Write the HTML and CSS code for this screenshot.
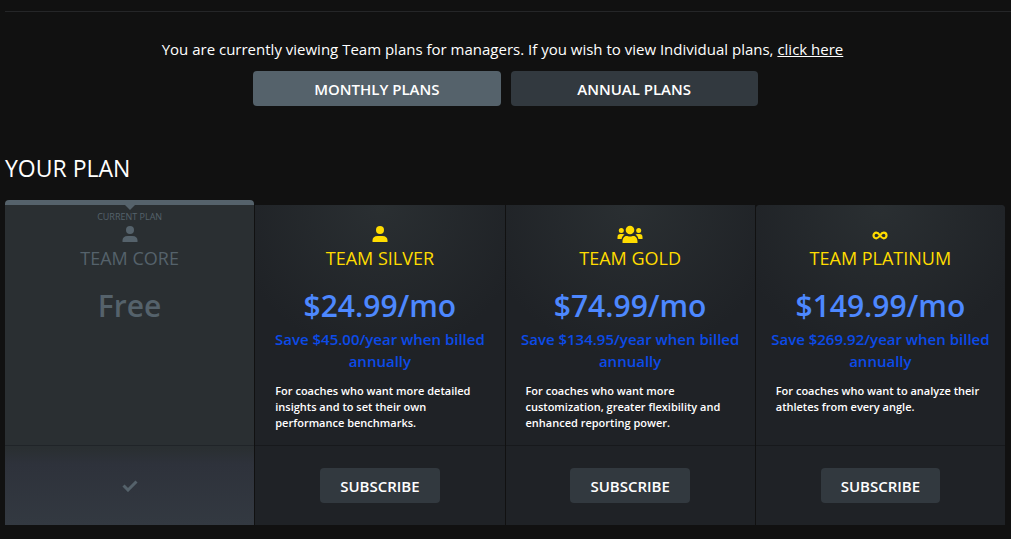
FILE: index.html
```
<!DOCTYPE html>
<html lang="en">
<head>
    <meta charset="UTF-8">
    <meta name="viewport" content="width=device-width, initial-scale=1.0">
    <title>Team Plans</title>
    <link rel="stylesheet" href="styles.css">
</head>
<body>
    <main class="page">
        <section class="intro">
            <p>You are currently viewing Team plans for managers. If you wish to view Individual plans, <a href="#individual">click here</a></p>
            <div class="billing">
                <button class="btn active" type="button">MONTHLY PLANS</button>
                <button class="btn" type="button">ANNUAL PLANS</button>
            </div>
        </section>

        <h1>YOUR PLAN</h1>

        <div class="plans">
            <article class="plan current">
                <div class="details">
                    <span class="tag">CURRENT PLAN</span>
                    <svg class="icon" viewBox="0 0 16 18" width="16" height="18" aria-hidden="true">
                        <circle cx="8" cy="5" r="4"/>
                        <path d="M0.5 17v-1.500c0-3 2-4.500 5-4.500h5c3 0 5 1.500 5 4.500V17z"/>
                    </svg>
                    <h2>TEAM CORE</h2>
                    <p class="price">Free</p>
                </div>
                <div class="action">
                    <svg class="check" viewBox="0 0 16 12" width="16" height="12" role="img" aria-label="Current plan">
                        <path d="M1.500 5.500l4.500 4.500L14.500 1.500"/>
                    </svg>
                </div>
            </article>

            <article class="plan">
                <div class="details">
                    <svg class="icon" viewBox="0 0 16 18" width="16" height="18" aria-hidden="true">
                        <circle cx="8" cy="5" r="4"/>
                        <path d="M0.5 17v-1.500c0-3 2-4.500 5-4.500h5c3 0 5 1.500 5 4.500V17z"/>
                    </svg>
                    <h2>TEAM SILVER</h2>
                    <p class="price">$24.99/mo</p>
                    <p class="saving">Save $45.00/year when billed annually</p>
                    <p class="text">For coaches who want more detailed insights and to set their own performance benchmarks.</p>
                </div>
                <div class="action">
                    <button class="btn" type="button">SUBSCRIBE</button>
                </div>
            </article>

            <article class="plan">
                <div class="details">
                    <svg class="icon" viewBox="0 0 26 18" width="26" height="18" aria-hidden="true">
                        <circle cx="13" cy="5" r="4.300"/>
                        <circle cx="4.300" cy="5.500" r="2.500"/>
                        <circle cx="21.700" cy="5.500" r="2.500"/>
                        <path d="M5.500 18v-1.500c0-3 1.500-5.500 4-5.500 1.200 0 1.800.6 3.500.6s2.300-.6 3.500-.6c2.500 0 4 2.500 4 5.500V18z"/>
                        <path d="M.5 14v-2c0-1.800 1-3 2.800-3H5.500c.9 0 1.600.3 2 .8-1.800 1-2.600 2.500-2.900 4.200z"/>
                        <path d="M25.500 14v-2c0-1.800-1-3-2.800-3h-2.200c-.9 0-1.600.3-2 .8 1.800 1 2.600 2.500 2.900 4.200z"/>
                    </svg>
                    <h2>TEAM GOLD</h2>
                    <p class="price">$74.99/mo</p>
                    <p class="saving">Save $134.95/year when billed annually</p>
                    <p class="text">For coaches who want more customization, greater flexibility and enhanced reporting power.</p>
                </div>
                <div class="action">
                    <button class="btn" type="button">SUBSCRIBE</button>
                </div>
            </article>

            <article class="plan">
                <div class="details">
                    <svg class="icon infinity" viewBox="0 0 16 18" width="16" height="18" aria-hidden="true">
                        <path d="M8 10.500C6.500 8.300 5.500 7.700 4.300 7.700a2.800 2.800 0 0 0 0 5.600C5.500 13.300 6.500 12.700 8 10.500s2.500-2.800 3.700-2.800a2.800 2.800 0 0 1 0 5.600C10.500 13.300 9.500 12.700 8 10.500z"/>
                    </svg>
                    <h2>TEAM PLATINUM</h2>
                    <p class="price">$149.99/mo</p>
                    <p class="saving">Save $269.92/year when billed annually</p>
                    <p class="text">For coaches who want to analyze their athletes from every angle.</p>
                </div>
                <div class="action">
                    <button class="btn" type="button">SUBSCRIBE</button>
                </div>
            </article>
        </div>
    </main>
</body>
</html>
```
FILE: styles.css
```
* {
    box-sizing: border-box;
}
body {
    margin: 0;
    background-color: #111;
    color: #fff;
    font-family: "Open Sans", sans-serif;
    font-size: 15px;
    line-height: 22px;
}
h1, h2, p {
    margin: 0;
    font-weight: 400;
}
.page {
    padding: 11px 0 14px 5px;
}
.intro {
    border-top: 1px solid #252628;
    padding: 26px 5px 28px 0;
    text-align: center;
}
.intro p {
    padding-right: 6px;
}
.intro a {
    color: #fff;
}
.billing {
    display: flex;
    justify-content: center;
    gap: 10px;
    margin-top: 11px;
    padding: 0 6px;
}
.billing .btn {
    width: 25%;
}
.btn {
    height: 35px;
    padding: 0 20px;
    border: none;
    border-radius: 4px;
    background-color: #32393f;
    color: #fff;
    font-family: inherit;
    font-size: 15px;
    font-weight: 600;
    cursor: pointer;
}
.btn.active {
    background-color: #55626b;
}
h1 {
    padding: 17px 0 15px;
    font-size: 23px;
    line-height: 34px;
}

/* plan columns */
.plans {
    display: grid;
    grid-template-columns: repeat(4, 1fr);
    gap: 1px;
    margin-right: 6px;
    padding-top: 5px;
}
.plan {
    display: flex;
    flex-direction: column;
    background-color: #1f2226;
    text-align: center;
}
.plan:last-child {
    border-radius: 4px 4px 0 0;
}
.details {
    flex: 1;
    min-height: 241px;
    padding: 20px 14px 12px;
    border-bottom: 1px solid #17191c;
    border-radius: inherit;
    background: radial-gradient(circle at top, #2a2f32, #1f2226 150px);
}
.icon {
    display: block;
    margin: 0 auto;
    fill: #ffdc00;
}
.infinity {
    fill: none;
    stroke: #ffdc00;
    stroke-width: 2.2;
}
h2 {
    margin-top: 3px;
    color: #ffdc00;
    font-size: 18px;
    line-height: 24px;
}
.price {
    margin-top: 16px;
    color: #4d88ff;
    font-size: 30px;
    font-weight: 600;
    line-height: 40px;
}
.saving {
    margin: 2px 0 11px;
    color: #0c4be8;
    font-weight: 600;
}
.text {
    padding: 0 6px;
    font-size: 11px;
    font-weight: 600;
    line-height: 16px;
    text-align: left;
}
.action {
    display: flex;
    align-items: center;
    justify-content: center;
    height: 79px;
}

/* the plan in use */
.current {
    position: relative;
    margin-top: -5px;
    border-top: 5px solid #55626b;
    border-radius: 4px 4px 0 0;
    background: linear-gradient(#2a2f32 0, #2a2f32 76%, #2e323b 81%, #333941);
}
.current::before {
    content: "";
    position: absolute;
    top: 0;
    left: 50%;
    margin-left: -5px;
    border: 5px solid transparent;
    border-top-color: #55626b;
    border-bottom: none;
}
.current .details {
    padding-top: 5px;
    border-bottom-color: #202428;
    background: none;
}
.tag {
    display: block;
    margin-bottom: 1px;
    color: #55626b;
    font-size: 9px;
    line-height: 14px;
}
.current .icon {
    fill: #55626b;
}
.current h2,
.current .price {
    color: #55626b;
}
.check {
    fill: none;
    stroke: #55626b;
    stroke-width: 3;
}
```
